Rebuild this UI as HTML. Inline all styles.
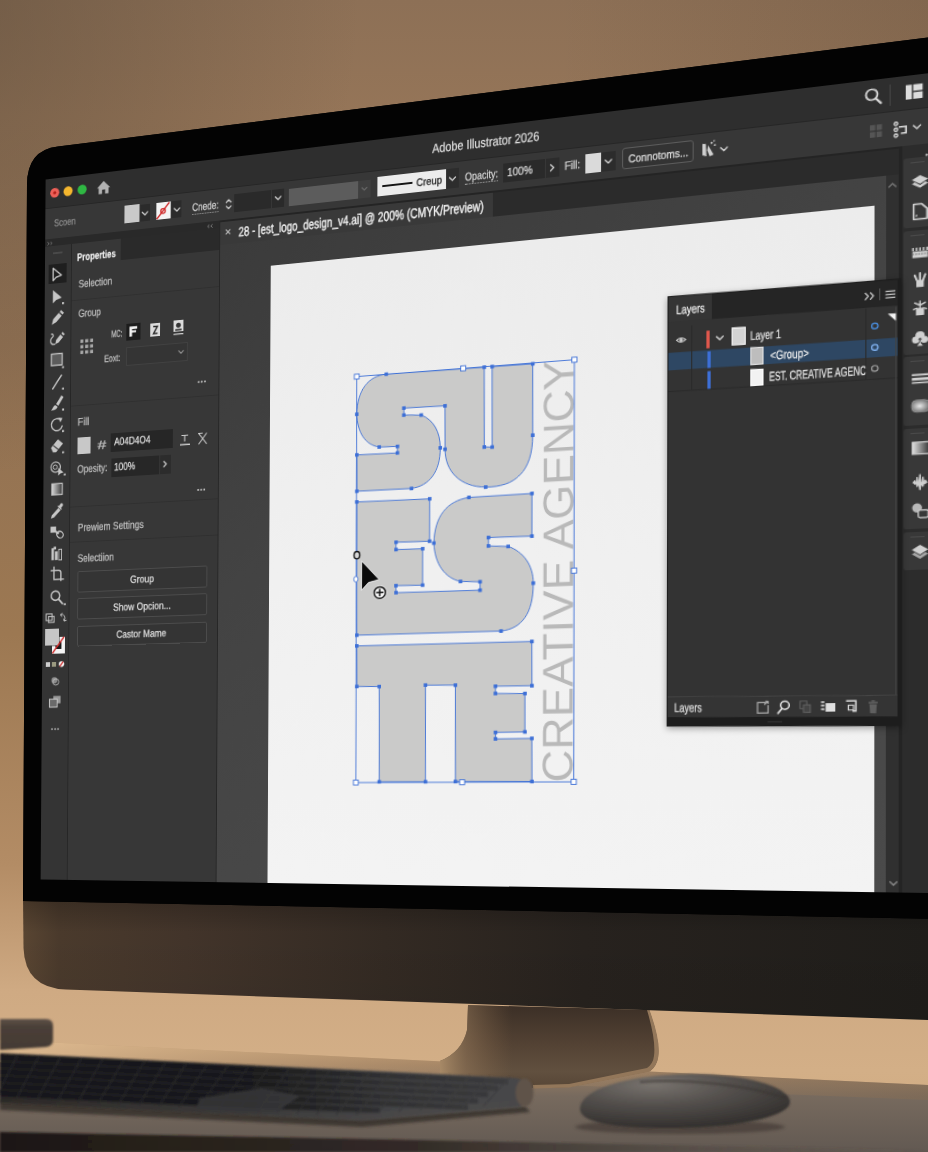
<!DOCTYPE html>
<html><head><meta charset="utf-8"><title>Adobe Illustrator 2026</title>
<style>
html,body{margin:0;padding:0}
body{width:928px;height:1152px;overflow:hidden;position:relative;background:#9a7656;font-family:"Liberation Sans",sans-serif}
#screen{position:absolute;left:0;top:0;width:883px;height:760px;transform-origin:0 0;transform:matrix3d(0.84621383,-0.1326261,0,-0.00016571785,-0.0068752963,0.91584874,0,-7.4087245e-06,0,0,1,0,45,179,0,1);background:#323232;overflow:hidden;color:#ddd;font-size:11px}
#screen *{box-sizing:border-box}
.a{position:absolute}
#screen .t{position:absolute;white-space:nowrap;line-height:1;color:#d6d6d6;font-size:11.5px;-webkit-text-stroke:0.3px currentColor}
#screen .b{position:absolute}
#screen svg{position:absolute;left:0;top:0;overflow:visible}

</style></head><body>
<svg id="bg" width="928" height="1152" viewBox="0 0 928 1152" style="position:absolute;left:0;top:0">
<defs>
<linearGradient id="wallv" x1="0" y1="0" x2="0" y2="1">
<stop offset="0" stop-color="#8d7056"/><stop offset="0.10" stop-color="#957558"/><stop offset="0.30" stop-color="#917153"/><stop offset="0.55" stop-color="#9c7852"/><stop offset="0.75" stop-color="#b38c65"/><stop offset="0.86" stop-color="#cfaa83"/><stop offset="0.93" stop-color="#d3af87"/><stop offset="1" stop-color="#cfa97f"/>
</linearGradient>
<radialGradient id="walltl" cx="0" cy="0" r="1" gradientUnits="userSpaceOnUse" gradientTransform="translate(-60 0) scale(420 480)">
<stop offset="0" stop-color="#574838" stop-opacity="0.52"/><stop offset="1" stop-color="#574838" stop-opacity="0"/>
</radialGradient>
<linearGradient id="wallr" x1="0" y1="0" x2="1" y2="0"><stop offset="0.6" stop-color="#3a2a1c" stop-opacity="0"/><stop offset="1" stop-color="#3a2a1c" stop-opacity="0.14"/></linearGradient>
<linearGradient id="deskg" x1="0" y1="0" x2="0" y2="1">
<stop offset="0" stop-color="#c9a57b"/><stop offset="0.22" stop-color="#a08264"/><stop offset="0.5" stop-color="#776a5e"/><stop offset="1" stop-color="#625952"/>
</linearGradient>
<linearGradient id="deskr" x1="0" y1="0" x2="1" y2="0">
<stop offset="0" stop-color="#e6c298" stop-opacity="0.8"/><stop offset="0.5" stop-color="#c09a70" stop-opacity="0.2"/><stop offset="1" stop-color="#8a6c4e" stop-opacity="0.35"/>
</linearGradient>
<linearGradient id="ching" x1="0" y1="0" x2="1" y2="0">
<stop offset="0" stop-color="#594532"/><stop offset="0.04" stop-color="#4a3a2c"/><stop offset="0.18" stop-color="#42342a"/><stop offset="0.4" stop-color="#332a23"/><stop offset="0.62" stop-color="#27221e"/><stop offset="1" stop-color="#1f1d1a"/>
</linearGradient>
<linearGradient id="chinv" x1="0" y1="0" x2="0" y2="1">
<stop offset="0" stop-color="#000" stop-opacity="0.25"/><stop offset="0.3" stop-color="#000" stop-opacity="0"/><stop offset="1" stop-color="#000" stop-opacity="0.05"/>
</linearGradient>
<linearGradient id="standg" x1="0" y1="0" x2="0" y2="1">
<stop offset="0" stop-color="#3b2f26"/><stop offset="0.45" stop-color="#524133"/><stop offset="0.8" stop-color="#61503f"/><stop offset="1" stop-color="#574636"/>
</linearGradient>
<linearGradient id="standl" x1="0" y1="0" x2="1" y2="0">
<stop offset="0" stop-color="#b4946e" stop-opacity="0.85"/><stop offset="0.22" stop-color="#9a7c5c" stop-opacity="0.5"/><stop offset="0.6" stop-color="#8a6a4a" stop-opacity="0"/>
</linearGradient>
</defs>
<rect width="928" height="1152" fill="url(#wallv)"/>
<rect width="928" height="500" fill="url(#walltl)"/>
<rect width="928" height="160" fill="url(#wallr)"/>
<!-- desk -->
<polygon points="0,1040 928,1085 928,1152 0,1152" fill="url(#deskg)"/>
<polygon points="0,1040 928,1085 928,1100 0,1062" fill="url(#deskr)"/>
<!-- stand -->
<path d="M440,1061 Q462,1052 467,1030 L468,1005 L649,1010 Q660,1040 658,1056 Q657,1066 650,1071 L569,1087 L533,1088 L440,1085 Z" fill="url(#standg)"/>
<path d="M440,1061 Q462,1052 467,1030 L468,1005 L560,1008 L560,1085 L440,1085 Z" fill="url(#standl)"/>
<path d="M647,1010 Q656,1040 654,1056 Q653,1064 647,1068 L569,1084 L533,1085 L533,1088.5 L569,1087.5 L650,1071.5 Q657,1066 658.5,1056 Q660.5,1040 649.5,1010 Z" fill="#93775a"/>
<!-- chin -->
<path d="M23,895 L928,915 L928,1020 L66,989.5 Q25,988 23.5,948 Z" fill="url(#ching)"/>
<path d="M23,895 L928,915 L928,1020 L66,989.5 Q25,988 23.5,948 Z" fill="url(#chinv)"/>
<!-- black bezel -->
<path d="M27,185 Q27,150 58,146.5 L928,37.5 L928,918.75 L23,901 Z" fill="#030303"/>
<circle cx="487.5" cy="106.5" r="1.6" fill="#15171a"/>
</svg>
<div id="screen">
<div class="b" style="left:0.0px;top:0.0px;width:883.0px;height:32.0px;background:#2e2e2e;"></div>
<div class="b" style="left:0.0px;top:32.0px;width:883.0px;height:34.0px;background:#373737;border-top:1px solid #262626;"></div>
<div class="b" style="left:0.0px;top:66.0px;width:199.0px;height:694.0px;background:#353535;"></div>
<div class="b" style="left:0.0px;top:66.0px;width:199.0px;height:8.0px;background:#292929;"></div>
<div class="b" style="left:0.0px;top:74.0px;width:31.0px;height:686.0px;background:#343434;"></div>
<div class="b" style="left:31.0px;top:74.0px;width:1.0px;height:686.0px;background:#262626;"></div>
<div class="b" style="left:32.0px;top:74.0px;width:166.0px;height:686.0px;background:#373737;"></div>
<div class="b" style="left:32.0px;top:74.0px;width:166.0px;height:23.0px;background:#2a2a2a;"></div>
<div class="b" style="left:32.0px;top:74.0px;width:56.0px;height:23.5px;background:#373737;"></div>
<div class="b" style="left:198.0px;top:66.0px;width:1.5px;height:694.0px;background:#262626;"></div>
<div class="b" style="left:199.0px;top:66.0px;width:684.0px;height:26.0px;background:#2b2b2b;"></div>
<div class="b" style="left:199.0px;top:92.0px;width:684.0px;height:668.0px;background:linear-gradient(150deg,#3b3b3b,#434343 35%,#484848 70%,#4a4a4a);"></div>
<div class="b" style="left:199.0px;top:66.0px;width:284.0px;height:26.0px;background:#393939;"></div>
<div class="b" style="left:199.0px;top:66.0px;width:684.0px;height:1.6px;background:#242424;"></div>
<div class="b" style="left:254.4px;top:118.7px;width:582.4px;height:645.0px;background:linear-gradient(180deg,#ececec,#f0f0f0 50%,#f3f3f3);"></div>
<div class="b" style="left:847.4px;top:92.0px;width:10.6px;height:668.0px;background:#303030;"></div>
<div class="b" style="left:858.0px;top:66.0px;width:2.5px;height:694.0px;background:#242424;"></div>
<div class="b" style="left:860.5px;top:66.0px;width:22.5px;height:694.0px;background:#2c2c2c;"></div>
<div class="t" style="left:421.7px;top:9.9px;font-size:13.0px;color:#e2e2e2;transform:scaleX(0.837);transform-origin:0 0;">Adobe Illustrator 2026</div>
<div class="b" style="left:850.3px;top:7.0px;width:1.0px;height:20.0px;background:#454545;"></div>
<div class="t" style="left:10.8px;top:44.3px;font-size:11.0px;color:#8c8c8c;transform:scaleX(0.802);transform-origin:0 0;">Scoen</div>
<div class="b" style="left:92.2px;top:39.2px;width:16.5px;height:19.0px;background:#c9c9c9;"></div>
<div class="b" style="left:109.8px;top:39.5px;width:11.0px;height:18.5px;background:#2b2b2b;"></div>
<div class="b" style="left:127.5px;top:39.7px;width:16.0px;height:18.5px;background:#f4f4f4;"></div>
<div class="b" style="left:145.3px;top:39.7px;width:11.0px;height:18.5px;background:#2b2b2b;"></div>
<div class="t" style="left:168.4px;top:43.9px;font-size:11.5px;color:#dadada;transform:scaleX(0.782);transform-origin:0 0;border-bottom:1px dotted #aaa;padding-bottom:1px;">Cnede:</div>
<div class="b" style="left:214.0px;top:39.7px;width:40.0px;height:19.0px;background:#2a2a2a;"></div>
<div class="b" style="left:255.0px;top:39.7px;width:13.0px;height:19.0px;background:#2a2a2a;"></div>
<div class="b" style="left:273.0px;top:40.7px;width:73.0px;height:18.0px;background:#5c5c5c;"></div>
<div class="b" style="left:346.0px;top:40.7px;width:13.0px;height:18.0px;background:#3f3f3f;"></div>
<div class="b" style="left:365.5px;top:38.7px;width:70.5px;height:20.5px;background:#ececec;"></div>
<div class="b" style="left:371.0px;top:48.0px;width:31.0px;height:2.3px;background:#151515;"></div>
<div class="t" style="left:406.0px;top:43.8px;font-size:11.0px;color:#222;transform:scaleX(0.868);transform-origin:0 0;">Creup</div>
<div class="b" style="left:437.0px;top:38.7px;width:12.0px;height:20.5px;background:#2d2d2d;"></div>
<div class="t" style="left:455.0px;top:43.9px;font-size:11.5px;color:#d6d6d6;transform:scaleX(0.782);transform-origin:0 0;border-bottom:1px dotted #aaa;padding-bottom:1px;">Opacity:</div>
<div class="b" style="left:492.5px;top:39.7px;width:41.0px;height:19.5px;background:#2a2a2a;"></div>
<div class="t" style="left:497.0px;top:44.1px;font-size:11.5px;color:#e0e0e0;transform:scaleX(0.850);transform-origin:0 0;">100%</div>
<div class="b" style="left:534.5px;top:39.7px;width:13.0px;height:19.5px;background:#2c2c2c;"></div>
<div class="t" style="left:553.0px;top:44.1px;font-size:11.5px;color:#d6d6d6;transform:scaleX(0.839);transform-origin:0 0;">Fill:</div>
<div class="b" style="left:573.4px;top:40.2px;width:14.8px;height:18.5px;background:#dadada;"></div>
<div class="b" style="left:589.0px;top:40.2px;width:12.5px;height:18.5px;background:#2c2c2c;"></div>
<div class="b" style="left:608.0px;top:38.2px;width:66.5px;height:21.0px;background:#333;border:1px solid #5c5c5c;border-radius:3px;"></div>
<div class="t" style="left:613.5px;top:43.6px;font-size:11.0px;color:#e0e0e0;transform:scaleX(0.856);transform-origin:0 0;">Connotoms...</div>
<div class="t" style="left:218.8px;top:73.0px;font-size:14.0px;color:#f0f0f0;transform:scaleX(0.749);transform-origin:0 0;-webkit-text-stroke:0.55px currentColor;">28 - [est_logo_design_v4.ai] @ 200% (CMYK/Preview)</div>
<div class="t" style="left:38.4px;top:84.0px;font-size:11.5px;color:#f2f2f2;font-weight:bold;transform:scaleX(0.782);transform-origin:0 0;">Properties</div>
<div class="t" style="left:40.0px;top:112.7px;font-size:11.5px;color:#c4c4c4;transform:scaleX(0.814);transform-origin:0 0;">Selection</div>
<div class="b" style="left:32.0px;top:135.0px;width:166.0px;height:1.0px;background:#303030;"></div>
<div class="t" style="left:40.3px;top:144.7px;font-size:11.5px;color:#c4c4c4;transform:scaleX(0.807);transform-origin:0 0;">Group</div>
<div class="t" style="left:77.5px;top:169.9px;font-size:10.5px;color:#c8c8c8;transform:scaleX(0.649);transform-origin:0 0;">MC:</div>
<div class="b" style="left:94.6px;top:166.0px;width:16.0px;height:17.5px;background:#1c1c1c;"></div>
<div class="b" style="left:122.3px;top:168.3px;width:10.6px;height:14.0px;background:#dcdcdc;"></div>
<div class="b" style="left:148.3px;top:167.3px;width:10.4px;height:12.0px;background:#dcdcdc;"></div>
<div class="t" style="left:69.7px;top:196.2px;font-size:10.5px;color:#c4c4c4;transform:scaleX(0.765);transform-origin:0 0;">Eoxt:</div>
<div class="b" style="left:94.7px;top:191.0px;width:69.0px;height:20.0px;background:#343434;border:1px solid #414141;"></div>
<div class="b" style="left:32.0px;top:249.0px;width:166.0px;height:1.0px;background:#303030;"></div>
<div class="t" style="left:40.3px;top:262.1px;font-size:11.5px;color:#c4c4c4;transform:scaleX(0.905);transform-origin:0 0;">Fill</div>
<div class="b" style="left:39.9px;top:283.5px;width:15.3px;height:18.0px;background:#c8c8c8;"></div>
<div class="t" style="left:62.5px;top:287.0px;font-size:13.0px;color:#c0c0c0;transform:scaleX(1.383);transform-origin:0 0;">#</div>
<div class="b" style="left:78.3px;top:282.3px;width:70.0px;height:19.7px;background:#262626;"></div>
<div class="t" style="left:81.5px;top:286.4px;font-size:11.5px;color:#e6e6e6;transform:scaleX(0.812);transform-origin:0 0;">A04D4O4</div>
<div class="t" style="left:40.1px;top:313.4px;font-size:11.5px;color:#c4c4c4;transform:scaleX(0.818);transform-origin:0 0;">Opesity:</div>
<div class="b" style="left:78.5px;top:308.5px;width:54.0px;height:20.0px;background:#272727;"></div>
<div class="t" style="left:82.0px;top:313.2px;font-size:11.5px;color:#e6e6e6;transform:scaleX(0.816);transform-origin:0 0;">100%</div>
<div class="b" style="left:133.5px;top:308.5px;width:12.5px;height:20.0px;background:#2c2c2c;"></div>
<div class="b" style="left:32.0px;top:358.0px;width:166.0px;height:1.0px;background:#303030;"></div>
<div class="t" style="left:40.6px;top:375.9px;font-size:11.5px;color:#c4c4c4;transform:scaleX(0.838);transform-origin:0 0;">Prewiem Settings</div>
<div class="b" style="left:32.0px;top:395.5px;width:166.0px;height:1.0px;background:#303030;"></div>
<div class="t" style="left:40.8px;top:409.0px;font-size:11.5px;color:#c4c4c4;transform:scaleX(0.832);transform-origin:0 0;">Selectiion</div>
<div class="b" style="left:41.0px;top:428.0px;width:146.3px;height:22.6px;background:#343434;border:1px solid #4c4c4c;border-radius:2px;"></div>
<div class="t" style="left:100.7px;top:433.9px;font-size:11.0px;color:#e4e4e4;transform:scaleX(0.883);transform-origin:0 0;">Group</div>
<div class="b" style="left:41.0px;top:457.2px;width:146.3px;height:22.6px;background:#343434;border:1px solid #4c4c4c;border-radius:2px;"></div>
<div class="t" style="left:81.7px;top:463.1px;font-size:11.0px;color:#e4e4e4;transform:scaleX(0.871);transform-origin:0 0;">Show Opcion...</div>
<div class="b" style="left:41.0px;top:486.5px;width:146.3px;height:22.6px;background:#343434;border:1px solid #4c4c4c;border-radius:2px;"></div>
<div class="t" style="left:86.2px;top:492.4px;font-size:11.0px;color:#e4e4e4;transform:scaleX(0.848);transform-origin:0 0;">Castor Mame</div>
<div class="b" style="left:4.5px;top:94.0px;width:21.0px;height:20.5px;background:#1f1f1f;"></div>
<div class="b" style="left:9.5px;top:81.0px;width:11.0px;height:1.6px;background:#4a4a4a;"></div>
<div class="b" style="left:12.0px;top:497.5px;width:14.5px;height:18.5px;background:#f4f4f4;"></div>
<div class="b" style="left:16.0px;top:502.5px;width:6.5px;height:8.0px;background:#1a1a1a;"></div>
<div class="b" style="left:4.2px;top:489.0px;width:16.0px;height:17.8px;background:#c6c6c6;box-shadow:0 0 0 0.6px #333;"></div>
<div class="b" style="left:5.0px;top:524.5px;width:4.6px;height:5.2px;background:#cfcfcf;"></div>
<div class="b" style="left:12.2px;top:524.5px;width:4.6px;height:5.2px;background:#9a9a80;"></div>
<div class="b" style="left:862.0px;top:78.0px;width:21.0px;height:64.5px;background:#383838;border-radius:2px 0 0 2px;"></div>
<div class="b" style="left:868.0px;top:82.0px;width:12.0px;height:1.4px;background:#4a4a4a;"></div>
<div class="b" style="left:862.0px;top:145.5px;width:21.0px;height:115.0px;background:#383838;border-radius:2px 0 0 2px;"></div>
<div class="b" style="left:868.0px;top:149.5px;width:12.0px;height:1.4px;background:#4a4a4a;"></div>
<div class="b" style="left:862.0px;top:263.0px;width:21.0px;height:64.0px;background:#383838;border-radius:2px 0 0 2px;"></div>
<div class="b" style="left:868.0px;top:267.0px;width:12.0px;height:1.4px;background:#4a4a4a;"></div>
<div class="b" style="left:862.0px;top:329.5px;width:21.0px;height:93.5px;background:#383838;border-radius:2px 0 0 2px;"></div>
<div class="b" style="left:868.0px;top:333.5px;width:12.0px;height:1.4px;background:#4a4a4a;"></div>
<div class="b" style="left:862.0px;top:425.5px;width:21.0px;height:35.5px;background:#383838;border-radius:2px 0 0 2px;"></div>
<div class="b" style="left:868.0px;top:429.5px;width:12.0px;height:1.4px;background:#4a4a4a;"></div>
<div class="b" style="left:650.5px;top:186.5px;width:209px;height:416.3px;background:#1d1d1d;transform:skewY(0.6deg);transform-origin:0 0;box-shadow:0 2px 6px rgba(0,0,0,.35)">
<div class="b" style="left:1.2px;top:1.2px;width:204.8px;height:24.0px;background:#252525;"></div>
<div class="b" style="left:1.2px;top:1.2px;width:40.0px;height:24.5px;background:#353535;"></div>
<div class="b" style="left:1.2px;top:25.2px;width:204.8px;height:382.0px;background:#333333;"></div>
<div class="b" style="left:1.2px;top:387.4px;width:204.8px;height:1.0px;background:#454545;"></div>
<div class="b" style="left:1.2px;top:388.4px;width:204.8px;height:19.0px;background:#343434;"></div>
<div class="b" style="left:1.2px;top:54.8px;width:204.8px;height:17.4px;background:#2e4763;"></div>
<div class="b" style="left:21.7px;top:30.0px;width:0.8px;height:62.0px;background:#2a2a2a;"></div>
<div class="b" style="left:178.3px;top:26.0px;width:0.8px;height:66.0px;background:#2a2a2a;"></div>
<div class="b" style="left:1.2px;top:91.5px;width:204.8px;height:0.8px;background:#2b2b2b;"></div>
<div class="b" style="left:36.3px;top:35.5px;width:3.2px;height:17.5px;background:#e0574c;"></div>
<div class="b" style="left:36.5px;top:55.5px;width:3.0px;height:16.5px;background:#3d6fd6;"></div>
<div class="b" style="left:36.5px;top:75.0px;width:3.0px;height:16.5px;background:#3d6fd6;"></div>
<div class="b" style="left:58.8px;top:35.2px;width:13.0px;height:17.0px;background:#d4d4d4;border:1px solid #f4f4f4;"></div>
<div class="b" style="left:76.4px;top:55.3px;width:12.0px;height:16.8px;background:#bdbdbd;border:1px solid #e4e4e4;"></div>
<div class="b" style="left:76.4px;top:75.5px;width:12.0px;height:16.5px;background:#f2f2f2;border:1px solid #fff;"></div>
<div class="b" style="left:204.0px;top:26.0px;width:0.8px;height:361.0px;background:#424242;"></div>
<div class="t" style="left:8.3px;top:7.9px;font-size:12.0px;color:#f4f4f4;transform:scaleX(0.736);transform-origin:0 0;">Layers</div>
<div class="t" style="left:76.3px;top:37.8px;font-size:12.0px;color:#e8e8e8;transform:scaleX(0.690);transform-origin:0 0;">Layer 1</div>
<div class="t" style="left:93.5px;top:57.6px;font-size:12.0px;color:#f0f0f0;transform:scaleX(0.730);transform-origin:0 0;">&lt;Group&gt;</div>
<div class="t" style="left:92.8px;top:77.8px;font-size:12.0px;color:#eaeaea;transform:scaleX(0.645);transform-origin:0 0;clip-path:inset(-2px 6.3% -2px 0);">EST. CREATIVE AGENCY</div>
<div class="t" style="left:7.3px;top:392.2px;font-size:12.0px;color:#e4e4e4;transform:scaleX(0.708);transform-origin:0 0;">Layers</div>
<svg width="209" height="418" viewBox="0 0 209 418"><g fill="none" stroke="#cfcfcf" stroke-width="1.2" stroke-linecap="round" stroke-linejoin="round"><path d="M178,11.5 l2.6,3 l-2.6,3 M182.5,11.5 l2.6,3 l-2.6,3"/></g>
<rect x="190" y="8" width="1" height="11" fill="#555"/>
<path d="M195.5,11.3 h8.5 M195.5,14.3 h8.5 M195.5,17.3 h8.5" stroke="#bdbdbd" stroke-width="1.3"/>
<path d="M8.5,43.3 Q12.7,39.3 17,43.3 Q12.7,47.3 8.5,43.3 Z" fill="none" stroke="#d6d6d6" stroke-width="1"/><circle cx="12.7" cy="43.3" r="1.5" fill="#d6d6d6"/>
<path d="M45.3,42.5 l3,3 l3,-3" fill="none" stroke="#d6d6d6" stroke-width="1.3" stroke-linecap="round" stroke-linejoin="round"/>
<circle cx="186.3" cy="42.8" r="2.7" fill="none" stroke="#4a8fe0" stroke-width="1.2"/><circle cx="186.3" cy="62.8" r="2.7" fill="none" stroke="#7fb0ee" stroke-width="1.2"/><circle cx="186.3" cy="82.5" r="2.7" fill="none" stroke="#9a9a9a" stroke-width="1.2"/>
<path d="M197.5,32.3 h7 v7 Z" fill="#f4f4f4"/>
<g fill="none" stroke="#a8a8a8" stroke-width="1.2"><path d="M90.5,393.5 h-7.5 v10 h9.5 v-7.5"/><path d="M89,395.5 l3.5,-3.2 m0,0 h-2.6 m2.6,0 v2.6"/></g>
<circle cx="107.5" cy="396.2" r="3.8" fill="none" stroke="#dcdcdc" stroke-width="1.5"/><path d="M104.8,399.4 l-3.4,4.3" stroke="#dcdcdc" stroke-width="1.7" stroke-linecap="round"/>
<g fill="none" stroke="#5e5e5e" stroke-width="1.1"><rect x="121" y="392.5" width="6" height="7"/><rect x="124" y="396.0" width="6" height="7" fill="#444"/></g>
<g fill="#e0e0e0"><rect x="143.5" y="394.5" width="8.5" height="8"/><rect x="139.5" y="392.7" width="3" height="1.6"/><rect x="139.5" y="396.0" width="3" height="1.6"/><rect x="139.5" y="399.3" width="3" height="1.6"/></g>
<g fill="none" stroke="#dcdcdc" stroke-width="1.4"><path d="M161.5,392.5 h8.5 v9.5 h-3"/><rect x="163.5" y="396.5" width="4.5" height="4.5" stroke-width="1.1"/></g>
<g fill="#5f5f5f"><rect x="181" y="393.5" width="8" height="1.5"/><rect x="183.5" y="392.0" width="3" height="1.6"/><path d="M181.8,395.7 h6.4 l-0.6,8.5 h-5.2 Z"/></g>
<rect x="92" y="411" width="13" height="1.6" fill="#2c2c2c"/></svg></div>
<svg width="883" height="760" viewBox="0 0 883 760">
<circle cx="11.5" cy="16.2" r="5.3" fill="#ec5f57"/>
<circle cx="27.0" cy="16.2" r="5.3" fill="#f4b62e"/>
<circle cx="43.3" cy="16.2" r="5.3" fill="#2fb743"/>
<circle cx="11.5" cy="16.2" r="1.8" fill="#b3201a"/>
<path d="M60.5,17.2 L68,9.8 L75.5,17.2 L73.6,17.2 L73.6,23.6 L69.8,23.6 L69.8,19 L66.2,19 L66.2,23.6 L62.4,23.6 L62.4,17.2 Z" fill="#b2b2b2"/>
<circle cx="834.5" cy="14.5" r="5" fill="none" stroke="#d8d8d8" stroke-width="1.7"/><path d="M838.2,18.6 L842.5,23.3" stroke="#d8d8d8" stroke-width="2" stroke-linecap="round"/>
<g fill="#dcdcdc"><rect x="864" y="9.5" width="5.2" height="13.5"/><rect x="870.4" y="9.5" width="8" height="6"/><rect x="870.4" y="16.8" width="8" height="6.2"/></g>
<g transform="translate(0,1.2)">
<path d="M112.2,47.0 l3.0,3.0 l3.0,-3.0" fill="none" stroke="#d0d0d0" stroke-width="1.3" stroke-linecap="round" stroke-linejoin="round"/>
<path d="M128.5,56 L142.5,39.5" stroke="#d02a2a" stroke-width="1.6"/><circle cx="135.5" cy="48" r="2.6" fill="none" stroke="#d02a2a" stroke-width="1.4"/>
<path d="M148.0,46.8 l3.0,3.0 l3.0,-3.0" fill="none" stroke="#d0d0d0" stroke-width="1.3" stroke-linecap="round" stroke-linejoin="round"/>
<path d="M205.4,46.6 l2.6,-2.6 l2.6,2.6" fill="none" stroke="#d0d0d0" stroke-width="1.3" stroke-linecap="round" stroke-linejoin="round"/>
<path d="M205.4,50.7 l2.6,2.6 l2.6,-2.6" fill="none" stroke="#d0d0d0" stroke-width="1.3" stroke-linecap="round" stroke-linejoin="round"/>
<path d="M258.5,46.5 l3.0,3.0 l3.0,-3.0" fill="none" stroke="#d0d0d0" stroke-width="1.3" stroke-linecap="round" stroke-linejoin="round"/>
<path d="M350.0,47.2 l2.5,2.5 l2.5,-2.5" fill="none" stroke="#6a6a6a" stroke-width="1.3" stroke-linecap="round" stroke-linejoin="round"/>
<path d="M439.5,46.8 l3.0,3.0 l3.0,-3.0" fill="none" stroke="#d0d0d0" stroke-width="1.3" stroke-linecap="round" stroke-linejoin="round"/>
<path d="M539.5,45.3 l3.0,3.0 l-3.0,3.0" fill="none" stroke="#d0d0d0" stroke-width="1.3" stroke-linecap="round" stroke-linejoin="round"/>
<path d="M592.0,46.8 l3.0,3.0 l3.0,-3.0" fill="none" stroke="#d0d0d0" stroke-width="1.3" stroke-linecap="round" stroke-linejoin="round"/>
<g fill="#cfcfcf"><path d="M683,41.5 l3.2,0.5 l0.6,12 l-3.8,-1.5 Z"/><path d="M688.3,43.5 l5,9.5 l-3.6,1.2 l-2.2,-6 Z"/><circle cx="691.5" cy="41.5" r="1"/><circle cx="694.5" cy="44" r="0.9"/><circle cx="693.8" cy="39.8" r="0.8"/></g>
<path d="M699.8,47.3 l3.0,3.0 l3.0,-3.0" fill="none" stroke="#d0d0d0" stroke-width="1.3" stroke-linecap="round" stroke-linejoin="round"/>
<g fill="#555"><rect x="833" y="42" width="4.6" height="5.2"/><rect x="838.8" y="42" width="4.6" height="5.2"/><rect x="833" y="48.6" width="4.6" height="5.2"/><rect x="838.8" y="48.6" width="4.6" height="5.2"/></g>
<g fill="none" stroke="#d6d6d6" stroke-width="1.3"><circle cx="855.5" cy="43.3" r="1.5"/><circle cx="855.5" cy="48.8" r="1.5"/><circle cx="855.5" cy="54.3" r="1.5"/><path d="M858,46.5 h6.2 v6 h-4.5" stroke-width="1.6"/></g>
<path d="M870.6,46.8 l3.0,3.0 l3.0,-3.0" fill="none" stroke="#d0d0d0" stroke-width="1.3" stroke-linecap="round" stroke-linejoin="round"/>
</g>
<path d="M205,76.3 l5,5 M210,76.3 l-5,5" stroke="#c4c4c4" stroke-width="1.1"/>
<path d="M187,69.3 l-1.8,1.6 l1.8,1.6 M190.5,69.3 l-1.8,1.6 l1.8,1.6" stroke="#9a9a9a" stroke-width="0.8" fill="none"/>
<path d="M3.5,69.3 l1.8,1.6 l-1.8,1.6 M7,69.3 l1.8,1.6 l-1.8,1.6" stroke="#8a8a8a" stroke-width="0.8" fill="none"/>
<path d="M849.5,103.0 l3.0,-3.0 l3.0,3.0" fill="none" stroke="#777" stroke-width="1.2" stroke-linecap="round" stroke-linejoin="round"/>
<path d="M850.5,749.5 l3.0,3.0 l3.0,-3.0" fill="none" stroke="#8a8a8a" stroke-width="1.2" stroke-linecap="round" stroke-linejoin="round"/>
<path d="M98.5,180 v-10.8 h8.7 v2.8 h-5.7 v1.6 h4.6 v2.2 h-4.6 v4.2 Z" fill="#f0f0f0"/>
<path d="M125.2,171.5 h4.8 l-4.4,7.6 h4.6" fill="none" stroke="#222" stroke-width="1.5"/>
<circle cx="153.5" cy="172.3" r="2.6" fill="#333"/><rect x="150" y="176.3" width="7" height="1.8" fill="#333"/><rect x="148" y="181" width="11" height="1.3" fill="#cfcfcf"/>
<rect x="42.5" y="178.5" width="3.4" height="3.6" fill="#a8a8a8"/>
<rect x="48.1" y="178.5" width="3.4" height="3.6" fill="#a8a8a8"/>
<rect x="53.7" y="178.5" width="3.4" height="3.6" fill="#a8a8a8"/>
<rect x="42.5" y="184.5" width="3.4" height="3.6" fill="#a8a8a8"/>
<rect x="48.1" y="184.5" width="3.4" height="3.6" fill="#a8a8a8"/>
<rect x="53.7" y="184.5" width="3.4" height="3.6" fill="#a8a8a8"/>
<rect x="42.5" y="190.5" width="3.4" height="3.6" fill="#a8a8a8"/>
<rect x="48.1" y="190.5" width="3.4" height="3.6" fill="#a8a8a8"/>
<rect x="53.7" y="190.5" width="3.4" height="3.6" fill="#a8a8a8"/>
<path d="M153.9,199.7 l2.6,2.6 l2.6,-2.6" fill="none" stroke="#9a9a9a" stroke-width="1.1" stroke-linecap="round" stroke-linejoin="round"/>
<circle cx="176.3" cy="234.3" r="1" fill="#d4d4d4"/>
<circle cx="179.7" cy="234.3" r="1" fill="#d4d4d4"/>
<circle cx="183.1" cy="234.3" r="1" fill="#d4d4d4"/>
<g stroke="#cfcfcf" fill="none" stroke-width="1.2"><path d="M157.5,289.5 h7.5 M161.2,289.5 v6.5"/><path d="M156,299.3 h11" stroke-width="1.5"/><path d="M176.5,288.5 l9,11.5 M185.5,288.5 l-9,11.5 M176,288.5 h5"/></g>
<path d="M138.1,315.7 l2.8,2.8 l-2.8,2.8" fill="none" stroke="#d0d0d0" stroke-width="1.3" stroke-linecap="round" stroke-linejoin="round"/>
<circle cx="176.3" cy="348" r="1" fill="#d4d4d4"/>
<circle cx="179.7" cy="348" r="1" fill="#d4d4d4"/>
<circle cx="183.1" cy="348" r="1" fill="#d4d4d4"/>
<g fill="#cacac9" stroke="#3d6fd6" stroke-width="0.9" stroke-linejoin="round">
<path d="M 345.7,280.1 C 346.2,255.7 357.2,241.6 376.0,241.4 L 475.0,242.0 L 475.3,321.9 L 483.1,322.4 L 482.8,242.0 L 522.7,242.4 L 522.9,313.2 C 523.0,349.3 505.8,363.6 476.8,362.0 C 451.7,360.6 436.2,344.2 436.1,321.6 L 435.9,277.9 L 394.2,277.2 L 394.2,284.3 L 411.9,285.5 C 424.7,291.2 431.3,304.4 431.3,319.9 C 431.4,343.9 420.7,357.4 402.3,359.2 L 346.1,358.9 L 345.9,321.7 L 387.8,322.3 L 387.8,315.7 L 369.1,315.1 C 354.6,312.2 346.4,298.8 345.7,280.1 Z"/>
<path d="M 346.1,369.8 L 420.8,370.7 L 420.9,413.4 L 386.8,412.9 L 386.8,420.3 L 413.9,420.7 L 414.0,457.4 L 386.9,456.9 L 387.0,464.0 L 471.6,464.7 L 471.6,456.3 L 452.1,455.2 C 436.6,451.3 426.1,436.7 425.2,415.5 C 425.9,388.8 437.7,373.9 460.2,371.4 L 522.3,370.9 L 522.4,413.1 L 479.8,412.5 L 479.8,420.9 L 499.2,422.3 C 514.3,428.0 523.9,442.3 523.9,459.7 C 524.0,489.4 513.1,504.3 492.5,506.1 L 346.8,505.9 Z"/>
<path d="M 346.8,516.8 L 522.7,517.3 L 522.9,561.0 L 487.2,560.8 L 487.2,568.0 L 516.1,568.6 L 516.2,606.5 L 487.4,606.7 L 487.4,613.1 L 523.0,613.0 L 523.2,655.5 L 447.8,655.3 L 447.4,558.9 L 417.3,558.2 L 417.7,655.4 L 370.6,655.3 L 370.2,558.7 L 347.0,558.2 Z"/>
</g>
<text transform="translate(562.3,656.5) rotate(-90)" font-family="Liberation Sans, sans-serif" font-size="41.5" fill="#b9b9b9" textLength="416" lengthAdjust="spacingAndGlyphs">CREATIVE AGENCY</text>
<path d="M345.5,241.5 L563,241.5 L563.5,656 L346.5,656 Z" fill="none" stroke="#3d6fd6" stroke-width="0.9"/>
<rect x="343.9" y="278.3" width="3.6" height="3.6" fill="#3d6fd6"/>
<rect x="344.1" y="319.9" width="3.6" height="3.6" fill="#3d6fd6"/>
<rect x="344.3" y="357.1" width="3.6" height="3.6" fill="#3d6fd6"/>
<rect x="344.3" y="368.0" width="3.6" height="3.6" fill="#3d6fd6"/>
<rect x="345.0" y="504.1" width="3.6" height="3.6" fill="#3d6fd6"/>
<rect x="345.0" y="515.0" width="3.6" height="3.6" fill="#3d6fd6"/>
<rect x="345.2" y="556.4" width="3.6" height="3.6" fill="#3d6fd6"/>
<rect x="367.3" y="313.3" width="3.6" height="3.6" fill="#3d6fd6"/>
<rect x="368.4" y="556.9" width="3.6" height="3.6" fill="#3d6fd6"/>
<rect x="368.8" y="653.5" width="3.6" height="3.6" fill="#3d6fd6"/>
<rect x="374.2" y="239.6" width="3.6" height="3.6" fill="#3d6fd6"/>
<rect x="385.0" y="411.1" width="3.6" height="3.6" fill="#3d6fd6"/>
<rect x="385.0" y="418.5" width="3.6" height="3.6" fill="#3d6fd6"/>
<rect x="385.1" y="455.1" width="3.6" height="3.6" fill="#3d6fd6"/>
<rect x="385.2" y="462.2" width="3.6" height="3.6" fill="#3d6fd6"/>
<rect x="386.0" y="313.9" width="3.6" height="3.6" fill="#3d6fd6"/>
<rect x="386.0" y="320.5" width="3.6" height="3.6" fill="#3d6fd6"/>
<rect x="392.4" y="275.4" width="3.6" height="3.6" fill="#3d6fd6"/>
<rect x="392.4" y="282.5" width="3.6" height="3.6" fill="#3d6fd6"/>
<rect x="400.5" y="357.4" width="3.6" height="3.6" fill="#3d6fd6"/>
<rect x="410.1" y="283.7" width="3.6" height="3.6" fill="#3d6fd6"/>
<rect x="412.1" y="418.9" width="3.6" height="3.6" fill="#3d6fd6"/>
<rect x="412.2" y="455.6" width="3.6" height="3.6" fill="#3d6fd6"/>
<rect x="415.5" y="556.4" width="3.6" height="3.6" fill="#3d6fd6"/>
<rect x="415.9" y="653.6" width="3.6" height="3.6" fill="#3d6fd6"/>
<rect x="419.0" y="368.9" width="3.6" height="3.6" fill="#3d6fd6"/>
<rect x="419.1" y="411.6" width="3.6" height="3.6" fill="#3d6fd6"/>
<rect x="423.4" y="413.7" width="3.6" height="3.6" fill="#3d6fd6"/>
<rect x="429.5" y="318.1" width="3.6" height="3.6" fill="#3d6fd6"/>
<rect x="434.1" y="276.1" width="3.6" height="3.6" fill="#3d6fd6"/>
<rect x="434.3" y="319.8" width="3.6" height="3.6" fill="#3d6fd6"/>
<rect x="445.6" y="557.1" width="3.6" height="3.6" fill="#3d6fd6"/>
<rect x="446.0" y="653.5" width="3.6" height="3.6" fill="#3d6fd6"/>
<rect x="450.3" y="453.4" width="3.6" height="3.6" fill="#3d6fd6"/>
<rect x="458.4" y="369.6" width="3.6" height="3.6" fill="#3d6fd6"/>
<rect x="469.8" y="454.5" width="3.6" height="3.6" fill="#3d6fd6"/>
<rect x="469.8" y="462.9" width="3.6" height="3.6" fill="#3d6fd6"/>
<rect x="473.2" y="240.2" width="3.6" height="3.6" fill="#3d6fd6"/>
<rect x="473.5" y="320.1" width="3.6" height="3.6" fill="#3d6fd6"/>
<rect x="475.0" y="360.2" width="3.6" height="3.6" fill="#3d6fd6"/>
<rect x="478.0" y="410.7" width="3.6" height="3.6" fill="#3d6fd6"/>
<rect x="478.0" y="419.1" width="3.6" height="3.6" fill="#3d6fd6"/>
<rect x="481.0" y="240.2" width="3.6" height="3.6" fill="#3d6fd6"/>
<rect x="481.3" y="320.6" width="3.6" height="3.6" fill="#3d6fd6"/>
<rect x="485.4" y="559.0" width="3.6" height="3.6" fill="#3d6fd6"/>
<rect x="485.4" y="566.2" width="3.6" height="3.6" fill="#3d6fd6"/>
<rect x="485.6" y="604.9" width="3.6" height="3.6" fill="#3d6fd6"/>
<rect x="485.6" y="611.3" width="3.6" height="3.6" fill="#3d6fd6"/>
<rect x="490.7" y="504.3" width="3.6" height="3.6" fill="#3d6fd6"/>
<rect x="497.4" y="420.5" width="3.6" height="3.6" fill="#3d6fd6"/>
<rect x="514.3" y="566.8" width="3.6" height="3.6" fill="#3d6fd6"/>
<rect x="514.4" y="604.7" width="3.6" height="3.6" fill="#3d6fd6"/>
<rect x="520.5" y="369.1" width="3.6" height="3.6" fill="#3d6fd6"/>
<rect x="520.6" y="411.3" width="3.6" height="3.6" fill="#3d6fd6"/>
<rect x="520.9" y="240.6" width="3.6" height="3.6" fill="#3d6fd6"/>
<rect x="520.9" y="515.5" width="3.6" height="3.6" fill="#3d6fd6"/>
<rect x="521.1" y="311.4" width="3.6" height="3.6" fill="#3d6fd6"/>
<rect x="521.1" y="559.2" width="3.6" height="3.6" fill="#3d6fd6"/>
<rect x="521.2" y="611.2" width="3.6" height="3.6" fill="#3d6fd6"/>
<rect x="521.4" y="653.7" width="3.6" height="3.6" fill="#3d6fd6"/>
<rect x="522.1" y="457.9" width="3.6" height="3.6" fill="#3d6fd6"/>
<rect x="343.0" y="239.0" width="5" height="5" fill="#fff" stroke="#3d6fd6" stroke-width="0.9"/>
<rect x="451.5" y="239.0" width="5" height="5" fill="#fff" stroke="#3d6fd6" stroke-width="0.9"/>
<rect x="560.5" y="239.0" width="5" height="5" fill="#fff" stroke="#3d6fd6" stroke-width="0.9"/>
<rect x="560.8" y="446.5" width="5" height="5" fill="#fff" stroke="#3d6fd6" stroke-width="0.9"/>
<rect x="561.0" y="653.5" width="5" height="5" fill="#fff" stroke="#3d6fd6" stroke-width="0.9"/>
<rect x="452.0" y="653.5" width="5" height="5" fill="#fff" stroke="#3d6fd6" stroke-width="0.9"/>
<rect x="344.0" y="653.5" width="5" height="5" fill="#fff" stroke="#3d6fd6" stroke-width="0.9"/>
<ellipse cx="345.6" cy="448.7" rx="2.2" ry="2.9" fill="#fff" stroke="#3d6fd6" stroke-width="0.9"/>
<ellipse cx="346.5" cy="424.2" rx="3" ry="3.7" fill="#d8d8d8" stroke="#111" stroke-width="1.4"/>
<path d="M351.4,430.3 L351.4,460.3 L358.6,452.6 L369.6,450 Z" fill="#0a0a0a" stroke="#f4f4f4" stroke-width="0.9" stroke-linejoin="round"/>
<circle cx="370.3" cy="463.3" r="7.3" fill="#f4f4f4"/><circle cx="370.3" cy="463.3" r="5.9" fill="#f6f6f6" stroke="#111" stroke-width="1.5"/><path d="M366.5,463.3 h7.6 M370.3,459.5 v7.6" stroke="#111" stroke-width="1.5"/>
<g transform="translate(14.8,105.3) rotate(0) scale(1.00)" fill="#c6c6c6" stroke="none"><path d="M-4.5,-7 L-4.5,6.5 L-0.8,3 L5.2,1.2 Z" fill="none" stroke="#c6c6c6" stroke-width="1.5" stroke-linejoin="round"/></g>
<g transform="translate(15.0,129.6) rotate(0) scale(1.00)" fill="#c6c6c6" stroke="none"><path d="M-4.8,-7.5 L-4.8,7 L-0.8,3.4 L5.6,1.5 Z"/><rect x="6" y="6.5" width="2.2" height="2.2"/></g>
<g transform="translate(15.2,152.7) rotate(0) scale(1.00)" fill="#c6c6c6" stroke="none"><path d="M-6,7 L-4.5,1 L2,-5.5 L5.5,-2 L-1,4.5 Z M3,-6.5 L4.8,-8.2 L8,-5 L6.3,-3.2 Z"/></g>
<g transform="translate(15.3,175.0) rotate(0) scale(1.00)" fill="#c6c6c6" stroke="none"><path d="M-2,6 L-1,1.5 L4,-4 L7,-1 L2,4.5 Z M5,-5 L6.4,-6.8 L9,-4 L7.5,-2.6 Z"/><path d="M-2,6 C-8,7 -9,1 -5,-2 C-3,-3.5 -5,-6 -7,-5" fill="none" stroke="#c6c6c6" stroke-width="1.3"/></g>
<g transform="translate(15.5,198.0) rotate(0) scale(1.00)" fill="#c6c6c6" stroke="none"><rect x="-6.5" y="-6.5" width="12.5" height="12.5" fill="#5c5c5c" stroke="#c6c6c6" stroke-width="1.4"/><rect x="6" y="7.5" width="2.2" height="2.2"/></g>
<g transform="translate(15.7,222.2) rotate(0) scale(1.00)" fill="#c6c6c6" stroke="none"><path d="M-5,7 L5,-7" stroke="#c6c6c6" stroke-width="1.6" stroke-linecap="round"/><rect x="6" y="6.5" width="2.2" height="2.2"/></g>
<g transform="translate(15.9,244.9) rotate(0) scale(1.00)" fill="#c6c6c6" stroke="none"><path d="M-1,1 L5,-8 L7.5,-6 L1.5,3 Z M-2,2 L0.8,4.2 C0,7 -3,8 -7,7.5 C-5,6 -4.5,3 -2,2 Z"/><rect x="6" y="6.5" width="2.2" height="2.2"/></g>
<g transform="translate(16.0,268.2) rotate(0) scale(1.00)" fill="#c6c6c6" stroke="none"><path d="M4.5,-4.5 A6.5,6.5 0 1 0 6.3,1.5" fill="none" stroke="#c6c6c6" stroke-width="1.5"/><path d="M1.5,-7.5 L6.5,-6.5 L4,-2 Z"/><rect x="6" y="6.5" width="2.2" height="2.2"/></g>
<g transform="translate(16.2,291.2) rotate(0) scale(1.00)" fill="#c6c6c6" stroke="none"><path d="M-7,2 L1,-7 L7,-2 L-1,7 L-4.5,7 Z"/><path d="M-4.3,-0.5 L1.5,4.3" stroke="#343434" stroke-width="1.1"/><rect x="6" y="6.5" width="2.2" height="2.2"/></g>
<g transform="translate(16.4,315.3) rotate(0) scale(1.00)" fill="#c6c6c6" stroke="none"><circle cx="-1.5" cy="-1" r="5.5" fill="none" stroke="#c6c6c6" stroke-width="1.3"/><circle cx="-2" cy="-1" r="2.3" fill="none" stroke="#c6c6c6" stroke-width="1"/><path d="M1.5,0 L1.5,8.5 L4,6.3 L7.5,5.2 Z"/><rect x="8" y="6.5" width="2.2" height="2.2"/></g>
<defs><linearGradient id="gt" x1="0" y1="0" x2="1" y2="0"><stop offset="0" stop-color="#d8d8d8"/><stop offset="1" stop-color="#3a3a3a"/></linearGradient></defs>
<g transform="translate(16.6,338.3) rotate(0) scale(1.00)" fill="#c6c6c6" stroke="none"><rect x="-6" y="-6" width="12" height="12" fill="url(#gt)" stroke="#c6c6c6" stroke-width="1.3"/></g>
<g transform="translate(16.8,362.2) rotate(0) scale(1.00)" fill="#c6c6c6" stroke="none"><path d="M-7,7.5 L-6,4 L1.5,-3.5 L4,-1 L-3.5,6.5 Z M2,-5.5 L4,-8 C5.5,-9.5 8,-7 6.5,-5.5 L4.5,-3.2 L5.5,-2.2 L4.5,-1.2 L0.5,-5.2 L1.3,-6.2 Z"/></g>
<g transform="translate(16.9,384.6) rotate(0) scale(1.00)" fill="#c6c6c6" stroke="none"><rect x="-7.5" y="-6" width="6.5" height="6.5"/><ellipse cx="3.5" cy="3" rx="4" ry="3.4" fill="none" stroke="#c6c6c6" stroke-width="1.3" transform="rotate(35 3.5 3)"/><path d="M-2,-1 L2,2" stroke="#c6c6c6" stroke-width="2.4"/></g>
<g transform="translate(17.1,408.4) rotate(0) scale(1.00)" fill="#c6c6c6" stroke="none"><rect x="-6.5" y="-6.5" width="3" height="13"/><rect x="-2.3" y="-3" width="3" height="9.5"/><rect x="2" y="-5" width="3.4" height="11.5" fill="none" stroke="#c6c6c6" stroke-width="1"/><rect x="-4" y="-8" width="3" height="3"/></g>
<g transform="translate(17.3,429.8) rotate(0) scale(1.00)" fill="#c6c6c6" stroke="none"><path d="M-3.5,-8 V6 H8 M-7.5,-3.5 H2 Q4.5,-3.5 4.5,-1 V8" fill="none" stroke="#c6c6c6" stroke-width="1.5"/></g>
<g transform="translate(17.5,455.4) rotate(0) scale(1.00)" fill="#c6c6c6" stroke="none"><circle cx="-1.8" cy="-2" r="5" fill="none" stroke="#c6c6c6" stroke-width="1.6"/><path d="M2,2 L6.2,6.8" stroke="#c6c6c6" stroke-width="2" stroke-linecap="round"/><rect x="8" y="6.5" width="2.2" height="2.2"/></g>
<g transform="translate(9.5,477.4) rotate(0) scale(1.00)" fill="#c6c6c6" stroke="none"><rect x="-4.5" y="-4.5" width="7" height="7" fill="none" stroke="#c6c6c6" stroke-width="1.1"/><rect x="-1.8" y="-1.8" width="6.5" height="6.5" fill="none" stroke="#c6c6c6" stroke-width="1.1"/></g>
<g transform="translate(24.5,477.6) rotate(0) scale(1.00)" fill="#c6c6c6" stroke="none"><path d="M-3,-3.5 C2,-4.5 3.5,0 1.5,3.5 M-3,-3.5 l2.6,-1.6 M-3,-3.5 l1.8,2.4 M1.5,3.5 l2.6,-0.8 M1.5,3.5 l-0.6,-2.6" fill="none" stroke="#c6c6c6" stroke-width="1"/></g>
<path d="M12.5,515.5 L26,498" stroke="#d02a2a" stroke-width="1.6"/>
<circle cx="23.2" cy="527.3" r="3.1" fill="#f2f2f2"/><path d="M21.2,530 L25.2,524.6" stroke="#d02a2a" stroke-width="1.3"/>
<g transform="translate(15.8,545.5) rotate(0) scale(1.00)" fill="#c6c6c6" stroke="none"><circle cx="-0.8" cy="-0.8" r="3.4" fill="#8a8a8a"/><circle cx="1" cy="1" r="3.4" fill="none" stroke="#c6c6c6" stroke-width="0.9"/></g>
<g transform="translate(16.0,567.6) rotate(0) scale(1.00)" fill="#c6c6c6" stroke="none"><rect x="-2" y="-6" width="8.5" height="8" fill="#9a9a9a"/><rect x="-6.5" y="-2.5" width="9" height="8.5" fill="#6a6a6a" stroke="#c6c6c6" stroke-width="1.1"/></g>
<circle cx="12.8" cy="597.2" r="1" fill="#c0c0c0"/>
<circle cx="16.3" cy="597.2" r="1" fill="#c0c0c0"/>
<circle cx="19.8" cy="597.2" r="1" fill="#c0c0c0"/>
<g transform="translate(876.2,101.2)" fill="#d0d0d0"><path d="M-7,-2.5 L0,-6.5 L7,-2.5 L0,1.5 Z"/><path d="M-7,1.2 L-4.5,-0.2 L0,2.8 L4.5,-0.2 L7,1.2 L0,5.4 Z"/></g>
<g transform="translate(876.2,128.6)" fill="#d0d0d0"><path d="M-5.5,-7 H1.5 L6,-2.5 V7 H-5.5 Z" fill="none" stroke="#d0d0d0" stroke-width="1.5" stroke-linejoin="round"/><path d="M-3,4 v-1.5 M-3.8,4 h1.6" stroke="#d0d0d0" stroke-width="0.8"/></g>
<g transform="translate(876.2,167.0)" fill="#d0d0d0"><rect x="-6.5" y="-1.5" width="13" height="6"/><path d="M-6,-5 v3 M-3,-5 v3 M0,-5 v3 M3,-5 v3 M6,-5 v3" stroke="#d0d0d0" stroke-width="1.4"/><path d="M-6.5,1 h13" stroke="#555" stroke-width="0.8" stroke-dasharray="1.5,1"/></g>
<g transform="translate(876.2,192.3)" fill="#d0d0d0"><rect x="-3.2" y="0" width="6.4" height="6.5"/><path d="M-4.5,-4.5 L-2.5,0.5 M0,-6.5 V0.5 M4.5,-5 L2.5,0.5" stroke="#d0d0d0" stroke-width="1.8" stroke-linecap="round"/></g>
<g transform="translate(876.2,218.4)" fill="#d0d0d0"><path d="M-3.5,6.5 V2 Q-3.5,-0.5 0,-0.5 Q3.5,-0.5 3.5,2 V6.5 Z"/><path d="M0,-1 V-6.5 M0,-2.5 L-4.5,-5 M0,-2.5 L4.5,-5 M-5.5,1 L-2.5,0 M5.5,1 L2.5,0" stroke="#d0d0d0" stroke-width="1.3" stroke-linecap="round"/></g>
<g transform="translate(876.2,246.9)" fill="#d0d0d0"><circle cx="0" cy="-3" r="4"/><circle cx="-3.6" cy="0.8" r="3.2"/><circle cx="3.6" cy="0.8" r="3.2"/><path d="M-2.5,6.5 Q0,4 0,1 Q0,4 2.5,6.5 Z"/><circle cx="0" cy="0.3" r="1.3" fill="#555"/></g>
<g transform="translate(876.2,283.9)" fill="#d0d0d0"><rect x="-7" y="-4.5" width="14" height="1.8"/><rect x="-7" y="-1" width="14" height="2.6"/><rect x="-7" y="3" width="14" height="1.4"/></g>
<defs><radialGradient id="blob" cx="0.45" cy="0.5" r="0.6"><stop offset="0" stop-color="#e8e8e8"/><stop offset="1" stop-color="#6a6a6a"/></radialGradient><linearGradient id="gr2" x1="0" y1="0" x2="1" y2="0"><stop offset="0" stop-color="#e0e0e0"/><stop offset="1" stop-color="#3c3c3c"/></linearGradient></defs>
<g transform="translate(876.2,309.3)" fill="#d0d0d0"><rect x="-7" y="-5.5" width="15" height="11" rx="4" fill="url(#blob)" stroke="#9a9a9a" stroke-width="0.8"/></g>
<g transform="translate(876.2,348.3)" fill="#d0d0d0"><rect x="-6.5" y="-5.5" width="14" height="11" fill="url(#gr2)" stroke="#cfcfcf" stroke-width="1.2"/></g>
<g transform="translate(876.2,380.2)" fill="#d0d0d0"><path d="M-6,0 L-4.5,-2 L-3.5,1.5 L-2.5,-5 L-1.2,3 L0,-7.5 L1.2,3 L2.5,-5 L3.5,1.5 L4.5,-2 L6,0 L4.5,1.5 L3.5,-0.5 L2.5,4 L1.2,0 L0,7 L-1.2,0 L-2.5,4 L-3.5,-0.5 L-4.5,1.5 Z" stroke="#d0d0d0" stroke-width="1"/></g>
<g transform="translate(876.2,406.3)" fill="#d0d0d0"><circle cx="-2.5" cy="-2.5" r="4.2" fill="#b8b8b8"/><rect x="-1.5" y="-0.5" width="8.5" height="7" rx="1.5" fill="#383838" stroke="#d0d0d0" stroke-width="1.2"/></g>
<g transform="translate(876.2,444.9)" fill="#d0d0d0"><path d="M-7,-2.5 L0,-7 L7,-2.5 L0,2 Z"/><path d="M-7,1.5 L-4.5,0 L0,3 L4.5,0 L7,1.5 L0,6 Z" fill="#a8a8a8"/></g>
<circle cx="881.8" cy="76.5" r="1" fill="#d8d8d8"/>
</svg>
</div>
<svg id="fg" width="928" height="1152" viewBox="0 0 928 1152" style="position:absolute;left:0;top:0;pointer-events:none">
<defs>
<linearGradient id="kbg" x1="0" y1="0" x2="1" y2="0">
<stop offset="0" stop-color="#222122"/><stop offset="0.5" stop-color="#2a2a2b"/><stop offset="0.75" stop-color="#3e3f41"/><stop offset="1" stop-color="#4a4a4c"/>
</linearGradient>
<linearGradient id="kbfront" x1="0" y1="0" x2="1" y2="0">
<stop offset="0" stop-color="#2c2927"/><stop offset="0.6" stop-color="#3f3e3e"/><stop offset="1" stop-color="#504c48"/>
</linearGradient>
<radialGradient id="mouseg" cx="0.35" cy="0.2" r="0.8">
<stop offset="0" stop-color="#78736e"/><stop offset="0.45" stop-color="#55514e"/><stop offset="1" stop-color="#33302e"/>
</radialGradient>
<linearGradient id="boxg" x1="0" y1="0" x2="0" y2="1">
<stop offset="0" stop-color="#5d5047"/><stop offset="0.25" stop-color="#4a3f38"/><stop offset="1" stop-color="#443a33"/>
</linearGradient>
<linearGradient id="botdark" x1="0" y1="0" x2="1" y2="0">
<stop offset="0" stop-color="#1d1714" stop-opacity="1"/><stop offset="0.45" stop-color="#2a231f" stop-opacity="0.85"/><stop offset="0.8" stop-color="#4a423c" stop-opacity="0.3"/><stop offset="1" stop-color="#4a423c" stop-opacity="0"/>
</linearGradient>
<filter id="blur2"><feGaussianBlur stdDeviation="1.6"/></filter>
<linearGradient id="kbfade" x1="0" y1="0" x2="1" y2="0"><stop offset="0" stop-color="#4a4a4c" stop-opacity="0"/><stop offset="0.5" stop-color="#4a4a4c" stop-opacity="0.5"/><stop offset="1" stop-color="#464648" stop-opacity="0.8"/></linearGradient>
<filter id="blur05"><feGaussianBlur stdDeviation="1.0"/></filter>
<filter id="blur1"><feGaussianBlur stdDeviation="0.8"/></filter>
</defs>
<!-- bezel frame -->
<path fill-rule="evenodd" d="M27,185 Q27,150 58,146.5 L928,37.5 L928,918.75 L23,901 Z M45.6,179.6 L928,73.2 L928,893.1 L40.6,879.4 Z" fill="#030303"/>
<!-- left box -->
<path d="M0,1019 L46,1019 Q53,1019 53,1026 L53,1040 Q53,1046 46,1047 L0,1050 Z" fill="url(#boxg)" filter="url(#blur1)"/>
<!-- desk bottom dark edge -->
<polygon points="0,1132 928,1150 928,1152 0,1152" fill="url(#botdark)" filter="url(#blur1)"/>
<!-- keyboard shadow -->
<path d="M0,1100 L362,1119 L525,1106 L530,1112 L362,1127 L0,1110 Z" fill="#2a2522" opacity="0.7" filter="url(#blur2)"/>
<!-- keyboard -->
<g filter="url(#blur05)">
<path d="M0,1053 L513,1078 Q533,1080 533,1092 Q533,1104 519,1107 L362,1120.5 L0,1102.5 Z" fill="url(#kbg)"/>
<path d="M0,1097 L362,1114 L519,1100 L519,1107 L362,1120.5 L0,1102.5 Z" fill="url(#kbfront)"/>
<path d="M0,1054.8 L508,1079.1 L508,1084.6 L0,1060.3 Z" fill="#19191a"/>
<path d="M0,1062.0 L498,1085.5 L498,1091.0 L0,1067.5 Z" fill="#19191a"/>
<path d="M0,1069.1 L488,1091.8 L488,1097.3 L0,1074.6 Z" fill="#19191a"/>
<path d="M0,1076.2 L478,1098.2 L478,1103.7 L0,1081.8 Z" fill="#19191a"/>
<path d="M0,1083.4 L468,1104.6 L468,1110.1 L0,1088.9 Z" fill="#19191a"/>
<path d="M0,1090.5 L380,1107.6 L380,1113.1 L0,1096.0 Z" fill="#19191a"/>
<path d="M18.0,1054.4 L-4.4,1098.4 M39.4,1055.4 L16.2,1099.4 M60.8,1056.4 L36.8,1100.4 M82.0,1057.4 L57.3,1101.4 M103.2,1058.4 L77.7,1102.4 M124.3,1059.4 L98.1,1103.4 M145.3,1060.4 L118.3,1104.4 M166.2,1061.4 L138.5,1105.4 M187.0,1062.4 L158.6,1106.4 M207.8,1063.4 L178.6,1107.4 M228.5,1064.4 L198.5,1108.4 M249.0,1065.4 L218.4,1109.4 M269.6,1066.4 L238.2,1110.4 M290.0,1067.4 L257.9,1111.4 M310.3,1068.3 L277.5,1112.3 M330.6,1069.3 L297.0,1113.3 M350.8,1070.3 L316.5,1114.3 M370.8,1071.2 L335.9,1115.2 M390.9,1072.2 L356.2,1114.9 M410.8,1073.1 L377.4,1113.4 M430.7,1074.1 L398.7,1112.0 M450.4,1075.0 L419.9,1110.6 M470.1,1076.0 L441.1,1109.2 M489.8,1076.9 L462.3,1107.7 M509.3,1077.8 L483.4,1106.3" stroke="#29292a" stroke-width="1.3" fill="none"/>
<path d="M200,1098 L262,1088 L300,1096 L275,1113 L196,1109 Z" fill="#363638" opacity="0.85"/>
<path d="M250,1064 L513,1078 Q533,1080 533,1092 Q533,1104 519,1107 L362,1120.5 L250,1115 Z" fill="url(#kbfade)"/>
<ellipse cx="524.5" cy="1092.5" rx="9" ry="14" fill="#5e5249"/>
</g>
<!-- mouse -->
<ellipse cx="680" cy="1127" rx="105" ry="7" fill="#3a332e" opacity="0.55" filter="url(#blur2)"/>
<path d="M580,1108 C582,1088 630,1075 690,1074 C750,1074 790,1088 790,1102 C790,1116 740,1128 670,1128 C610,1128 579,1122 580,1108 Z" fill="url(#mouseg)" filter="url(#blur1)"/>
<path d="M640,1082 C690,1078 750,1086 786,1098" stroke="#37332f" stroke-width="2" fill="none" opacity="0.6" filter="url(#blur1)"/>
</svg>
</body></html>
